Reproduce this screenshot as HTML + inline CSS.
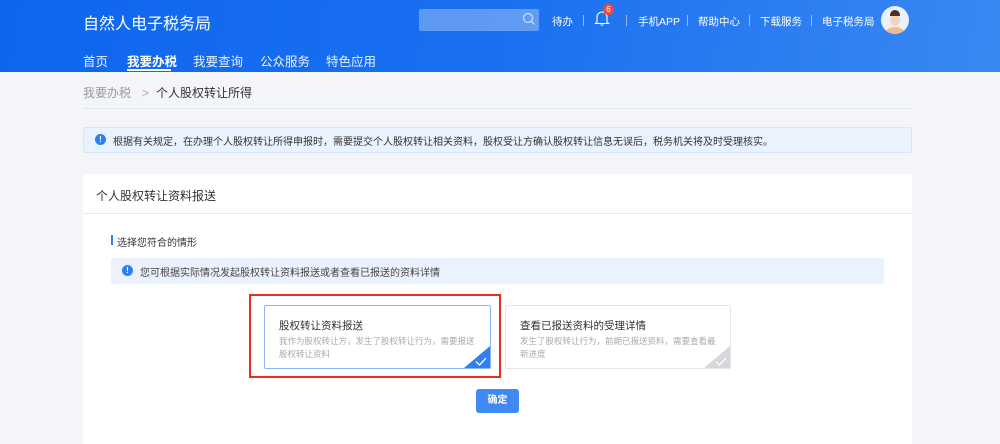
<!DOCTYPE html>
<html><head><meta charset="utf-8"><style>
*{margin:0;padding:0;box-sizing:border-box}
body{width:1000px;height:439px;overflow:hidden;background:#f3f5f8;font-family:"Liberation Sans","Noto Sans CJK SC",sans-serif;position:relative}
.hd{position:absolute;left:0;top:0;width:1000px;height:72px;background:linear-gradient(100deg,#0e66ee 0%,#1a70f0 50%,#3a88f2 100%);color:#fff}
.a{position:absolute;white-space:nowrap}
.sep{position:absolute;top:15px;width:1px;height:11px;background:rgba(255,255,255,.5)}
.nav{font-size:12.5px;top:51px;color:#e8f0ff}
.t12{font-size:10.5px;top:14px}
</style></head><body>
<div class="hd">
 <div class="a" style="left:83px;top:10px;font-size:16px">自然人电子税务局</div>
 <div class="a" style="left:419px;top:9px;width:120px;height:22px;background:rgba(255,255,255,.3);border-radius:2px"></div>
 <svg class="a" style="left:522px;top:12px" width="14" height="14" viewBox="0 0 14 14"><circle cx="6" cy="6" r="4.5" fill="none" stroke="#cfe0ff" stroke-width="1.2"/><path d="M9.3 9.3L12.5 12.5" stroke="#cfe0ff" stroke-width="1.2"/></svg>
 <div class="a t12" style="left:552px">待办</div>
 <div class="sep" style="left:583px"></div>
 <svg class="a" style="left:594px;top:9px" width="16" height="18" viewBox="0 0 16 18"><path d="M3 13V8a5 5 0 0 1 10 0v5l1.5 1.5h-13z M6.5 16h3" fill="none" stroke="#fff" stroke-width="1.1"/></svg>
 <div class="a" style="left:603px;top:4px;width:11px;height:11px;border-radius:50%;background:#f04a3a;font-size:8px;line-height:11px;text-align:center">6</div>
 <div class="sep" style="left:626px"></div>
 <div class="a t12" style="left:638px">手机APP</div>
 <div class="sep" style="left:687px"></div>
 <div class="a t12" style="left:698px">帮助中心</div>
 <div class="sep" style="left:749px"></div>
 <div class="a t12" style="left:760px">下载服务</div>
 <div class="sep" style="left:811px"></div>
 <div class="a t12" style="left:822px">电子税务局</div>
 <div class="a" style="left:881px;top:6px;width:28px;height:28px;border-radius:50%;background:#eaf1fb;overflow:hidden"><div style="position:absolute;left:9px;top:8px;width:10px;height:12px;border-radius:50%;background:#f6d3bd"></div><div style="position:absolute;left:9px;top:4px;width:10px;height:6px;border-radius:5px 5px 0 0;background:#4a3028"></div><div style="position:absolute;left:5px;top:21px;width:18px;height:10px;border-radius:50%;background:#f3b98c"></div></div>
 <div class="a nav" style="left:83px">首页</div>
 <div class="a nav" style="left:127px;font-weight:bold;color:#fff">我要办税</div>
 <div class="a" style="left:127px;top:69px;width:44px;height:2px;background:#fff"></div>
 <div class="a nav" style="left:193px">我要查询</div>
 <div class="a nav" style="left:260px">公众服务</div>
 <div class="a nav" style="left:326px">特色应用</div>
</div>
<div class="a" style="left:83px;top:84px;font-size:12px;color:#999">我要办税<span style="margin:0 7px 0 11px;color:#aaa">&gt;</span><span style="color:#333">个人股权转让所得</span></div>
<div class="a" style="left:83px;top:108px;width:829px;height:1px;background:#e3e6ea"></div>
<div class="a" style="left:83px;top:127px;width:829px;height:26px;background:#eaf2fd;border:1px solid #d8e6fa;border-radius:2px"></div>
<div class="a" style="left:95px;top:134px;width:11px;height:11px;border-radius:50%;background:#2f7ff0;color:#fff;font-size:8px;line-height:11px;text-align:center;font-weight:bold">!</div>
<div class="a" style="left:113px;top:133px;font-size:10px;color:#333">根据有关规定，在办理个人股权转让所得申报时，需要提交个人股权转让相关资料，股权受让方确认股权转让信息无误后，税务机关将及时受理核实。</div>
<div class="a" style="left:83px;top:174px;width:829px;height:270px;background:#fff"></div>
<div class="a" style="left:96px;top:187px;font-size:12px;color:#333">个人股权转让资料报送</div>
<div class="a" style="left:83px;top:213px;width:829px;height:1px;background:#e8eaed"></div>
<div class="a" style="left:111px;top:235px;width:2px;height:10px;background:#2f7ff0"></div>
<div class="a" style="left:117px;top:234px;font-size:10px;color:#333">选择您符合的情形</div>
<div class="a" style="left:111px;top:258px;width:773px;height:26px;background:#eaf2fd;border-radius:2px"></div>
<div class="a" style="left:122px;top:265px;width:11px;height:11px;border-radius:50%;background:#2f7ff0;color:#fff;font-size:8px;line-height:11px;text-align:center;font-weight:bold">!</div>
<div class="a" style="left:140px;top:264px;font-size:10px;color:#444">您可根据实际情况发起股权转让资料报送或者查看已报送的资料详情</div>
<div class="a" style="left:249px;top:294px;width:252px;height:84px;border:2px solid #ee2a24"></div>
<div class="a" style="left:264px;top:305px;width:227px;height:64px;border:1px solid #8cb6f5;border-radius:2px;overflow:hidden">
 <div class="a" style="left:14px;top:12px;font-size:10.5px;color:#333">股权转让资料报送</div>
 <div class="a" style="left:14px;top:29px;font-size:8.5px;color:#aaa;line-height:13px">我作为股权转让方，发生了股权转让行为，需要报送<br>股权转让资料</div>
 <div class="a" style="right:0;bottom:0;width:0;height:0;border-left:26px solid transparent;border-bottom:22px solid #2f7ff0"></div>
 <svg class="a" style="right:3px;bottom:2px" width="12" height="9" viewBox="0 0 12 9"><path d="M1 4.5L4.5 8L11 1" fill="none" stroke="#fff" stroke-width="1.3"/></svg>
</div>
<div class="a" style="left:505px;top:305px;width:226px;height:64px;border:1px solid #e3e5e8;border-radius:2px;overflow:hidden">
 <div class="a" style="left:14px;top:12px;font-size:10.5px;color:#333">查看已报送资料的受理详情</div>
 <div class="a" style="left:14px;top:29px;font-size:8.5px;color:#aaa;line-height:13px">发生了股权转让行为，前期已报送资料，需要查看最<br>新进度</div>
 <div class="a" style="right:0;bottom:0;width:0;height:0;border-left:26px solid transparent;border-bottom:22px solid #d5d7db"></div>
 <svg class="a" style="right:3px;bottom:2px" width="12" height="9" viewBox="0 0 12 9"><path d="M1 4.5L4.5 8L11 1" fill="none" stroke="#fff" stroke-width="1.3"/></svg>
</div>
<div class="a" style="left:476px;top:389px;width:43px;height:24px;background:#4089f3;border-radius:3px;color:#fff;font-size:10px;font-weight:bold;line-height:24px;text-align:center">确定</div>
</body></html>
